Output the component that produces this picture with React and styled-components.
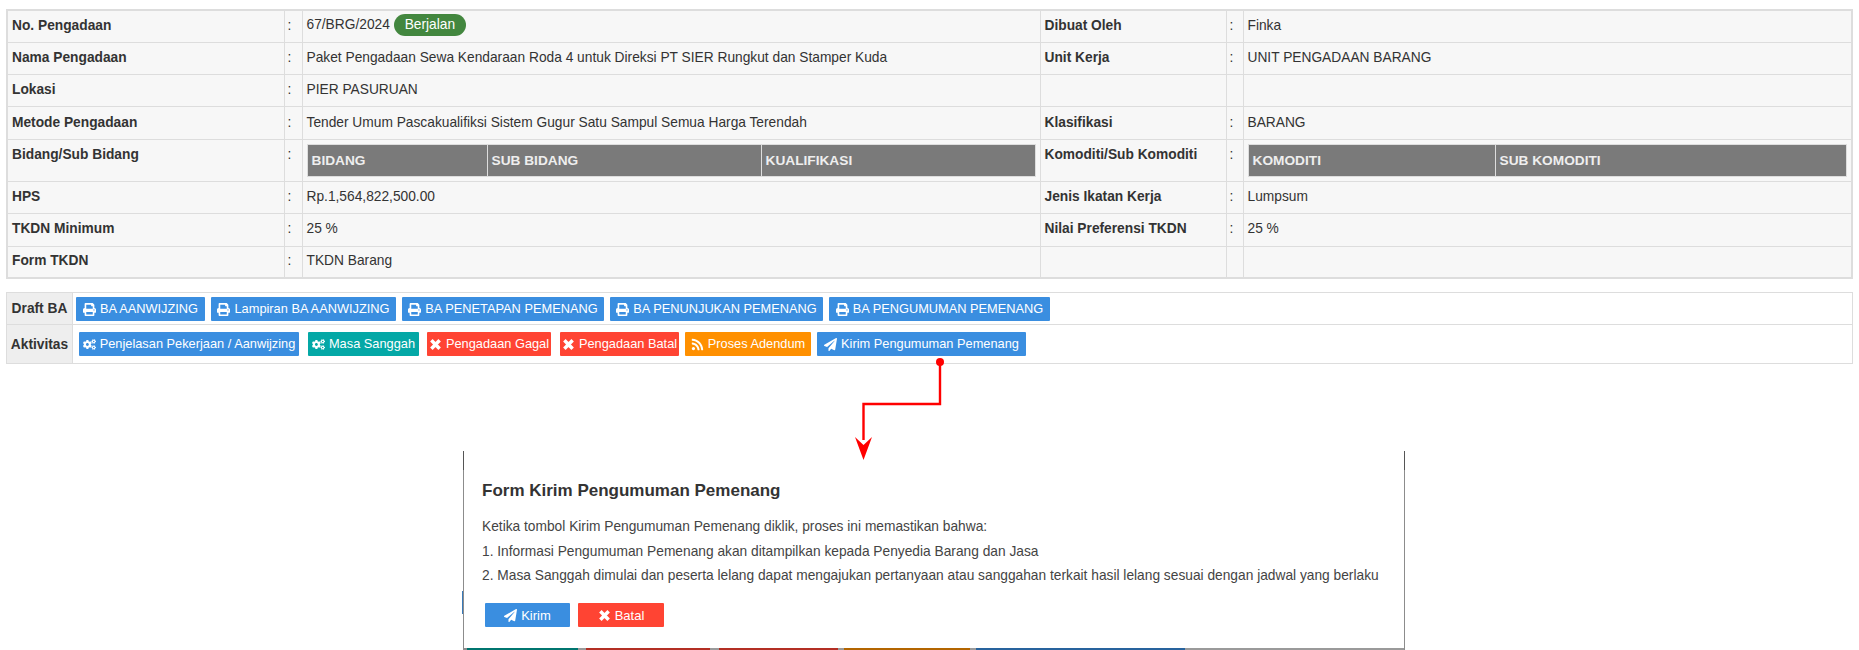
import React from "react";
import styled, { createGlobalStyle } from "styled-components";
import { FaPrint, FaCogs, FaRss, FaPaperPlane } from "react-icons/fa";

const TimesIcon = () => (
  <XSvg viewBox="0 0 11 11">
    <path d="M2 2L9 9M9 2L2 9" fill="none" stroke="currentColor" strokeWidth="3" />
  </XSvg>
);

const draftButtons = [
  { label: "BA AANWIJZING", width: 129 },
  { label: "Lampiran BA AANWIJZING", width: 185 },
  { label: "BA PENETAPAN PEMENANG", width: 202 },
  { label: "BA PENUNJUKAN PEMENANG", width: 213 },
  { label: "BA PENGUMUMAN PEMENANG", width: 221 },
];

const activityButtons = [
  { label: "Penjelasan Pekerjaan / Aanwijzing", width: 220, color: "#3a8ee0", Icon: FaCogs, gap: 0 },
  { label: "Masa Sanggah", width: 111, color: "#04a8a6", Icon: FaCogs, gap: 9 },
  { label: "Pengadaan Gagal", width: 124, color: "#ff4433", Icon: TimesIcon, gap: 8 },
  { label: "Pengadaan Batal", width: 119, color: "#ff4433", Icon: TimesIcon, gap: 9 },
  { label: "Proses Adendum", width: 126, color: "#ff9000", Icon: FaRss, gap: 6 },
  { label: "Kirim Pengumuman Pemenang", width: 209, color: "#3a8ee0", Icon: FaPaperPlane, gap: 6 },
];

const strips = [
  { width: 3, color: "#8c8c8c" },
  { width: 111, color: "#00756f" },
  { width: 8, color: "#9a9a9a" },
  { width: 124, color: "#b32f24" },
  { width: 9, color: "#9a9a9a" },
  { width: 119, color: "#b32f24" },
  { width: 6, color: "#9a9a9a" },
  { width: 126, color: "#b36500" },
  { width: 6, color: "#9a9a9a" },
  { width: 209, color: "#28639d" },
  { width: 219, color: "#9a9a9a" },
];

const App = () => {
  return (
    <Page>
      <GlobalStyle />
      <InfoTable>
        <colgroup>
          <Col $width={277} />
          <Col $width={18} />
          <Col $width={738} />
          <Col $width={186} />
          <Col $width={17} />
          <Col />
        </colgroup>
        <tbody>
          <Row label="No. Pengadaan" label2="Dibuat Oleh" value2="Finka">
            67/BRG/2024 <Badge>Berjalan</Badge>
          </Row>
          <Row label="Nama Pengadaan" label2="Unit Kerja" value2="UNIT PENGADAAN BARANG">
            Paket Pengadaan Sewa Kendaraan Roda 4 untuk Direksi PT SIER Rungkut dan Stamper Kuda
          </Row>
          <Row label="Lokasi">PIER PASURUAN</Row>
          <Row label="Metode Pengadaan" label2="Klasifikasi" value2="BARANG">
            Tender Umum Pascakualifiksi Sistem Gugur Satu Sampul Semua Harga Terendah
          </Row>
          <tr>
            <LabelCell $top>Bidang/Sub Bidang</LabelCell>
            <ColonCell $top>:</ColonCell>
            <ValueCell $nested>
              <HeadTable>
                <thead>
                  <tr>
                    <HeadCell $width={180}>BIDANG</HeadCell>
                    <HeadCell $width={274}>SUB BIDANG</HeadCell>
                    <HeadCell>KUALIFIKASI</HeadCell>
                  </tr>
                </thead>
              </HeadTable>
            </ValueCell>
            <LabelCell $top>Komoditi/Sub Komoditi</LabelCell>
            <ColonCell $top>:</ColonCell>
            <ValueCell $nested>
              <HeadTable>
                <thead>
                  <tr>
                    <HeadCell $width={247}>KOMODITI</HeadCell>
                    <HeadCell>SUB KOMODITI</HeadCell>
                  </tr>
                </thead>
              </HeadTable>
            </ValueCell>
          </tr>
          <Row label="HPS" label2="Jenis Ikatan Kerja" value2="Lumpsum">
            Rp.1,564,822,500.00
          </Row>
          <Row label="TKDN Minimum" label2="Nilai Preferensi TKDN" value2="25 %">
            25 %
          </Row>
          <Row label="Form TKDN">TKDN Barang</Row>
        </tbody>
      </InfoTable>

      <ActionTable>
        <tbody>
          <tr>
            <ActionLabel $height={31}>Draft BA</ActionLabel>
            <ActionCell $left={3} $top={4} $bottom={3}>
              {draftButtons.map((b, i) => (
                <ActionButton key={b.label} $width={b.width} $gap={i ? 6 : 0} $color="#3a8ee0">
                  <FaPrint />
                  <span>{b.label}</span>
                </ActionButton>
              ))}
            </ActionCell>
          </tr>
          <tr>
            <ActionLabel $height={38}>Aktivitas</ActionLabel>
            <ActionCell $left={6} $top={7} $bottom={6}>
              {activityButtons.map((b) => (
                <ActionButton key={b.label} $width={b.width} $gap={b.gap} $color={b.color}>
                  <b.Icon />
                  <span>{b.label}</span>
                </ActionButton>
              ))}
            </ActionCell>
          </tr>
        </tbody>
      </ActionTable>

      <Connector width="90" height="104" viewBox="0 0 90 104">
        <circle cx="85" cy="4" r="4" fill="#f00" />
        <path d="M85 4V46H8.5V82" fill="none" stroke="#f00" strokeWidth="2.4" />
        <path d="M0 79L8.5 87L17 79L8.5 102Z" fill="#f00" />
      </Connector>

      <Modal>
        <LeftStub />
        <ModalTitle>Form Kirim Pengumuman Pemenang</ModalTitle>
        <ModalText>Ketika tombol Kirim Pengumuman Pemenang diklik, proses ini memastikan bahwa:</ModalText>
        <ModalText>1. Informasi Pengumuman Pemenang akan ditampilkan kepada Penyedia Barang dan Jasa</ModalText>
        <ModalText>
          2. Masa Sanggah dimulai dan peserta lelang dapat mengajukan pertanyaan atau sanggahan terkait hasil lelang
          sesuai dengan jadwal yang berlaku
        </ModalText>
        <ModalActions>
          <ModalButton $color="#3a8ee0" $width={85}>
            <FaPaperPlane />
            <span>Kirim</span>
          </ModalButton>
          <ModalButton $color="#ff4433" $width={86}>
            <TimesIcon />
            <span>Batal</span>
          </ModalButton>
        </ModalActions>
        <BottomEdge>
          {strips.map((s, i) => (
            <EdgeStrip key={i} $width={s.width} $color={s.color} />
          ))}
        </BottomEdge>
      </Modal>
    </Page>
  );
};

const Row = ({ label, label2, value2, children }) => (
  <tr>
    <LabelCell>{label}</LabelCell>
    <ColonCell>:</ColonCell>
    <ValueCell>{children}</ValueCell>
    <LabelCell>{label2}</LabelCell>
    <ColonCell>{label2 ? ":" : ""}</ColonCell>
    <ValueCell>{value2}</ValueCell>
  </tr>
);

export default App;

const GlobalStyle = createGlobalStyle`
  html, body {
    margin: 0;
    height: 650px;
    overflow: hidden;
    background: #fff;
  }
  body {
    font-family: "Liberation Sans", Arial, sans-serif;
    font-size: 13.75px;
    color: #333;
  }
`;

const Page = styled.div`
  position: relative;
  width: 1859px;
  height: 650px;
  padding: 9px 6px 0;
  box-sizing: border-box;
  overflow: hidden;
`;

const XSvg = styled.svg`
  width: 10px;
  height: 10px;
  flex: none;
`;

const InfoTable = styled.table`
  width: 1847px;
  table-layout: fixed;
  border-collapse: collapse;
  background: #f7f7f7;
  border: 2px solid #ddd;
  & tr {
    height: 32.3px;
  }
  & td {
    border: 1px solid #ddd;
  }
`;

const Col = styled.col`
  width: ${(p) => (p.$width ? `${p.$width}px` : "auto")};
`;

const LabelCell = styled.td`
  padding: ${(p) => (p.$top ? "7px 4px 0" : "0 4px 2px")};
  vertical-align: ${(p) => (p.$top ? "top" : "middle")};
  font-weight: bold;
  box-sizing: border-box;
`;

const ColonCell = styled.td`
  padding: ${(p) => (p.$top ? "7px 0 0 3px" : "0 0 2px 3px")};
  vertical-align: ${(p) => (p.$top ? "top" : "middle")};
  box-sizing: border-box;
`;

const ValueCell = styled.td`
  padding: ${(p) => (p.$nested ? "4px" : "0 4px 2px")};
  box-sizing: border-box;
`;

const Badge = styled.span`
  display: inline-block;
  height: 22px;
  line-height: 22px;
  padding: 0 11px;
  margin-left: 0;
  border-radius: 11px;
  background: #43873f;
  color: #fff;
  vertical-align: middle;
`;

const HeadTable = styled.table`
  width: 100%;
  table-layout: fixed;
  border-collapse: collapse;
  border: 1px solid #ddd;
`;

const HeadCell = styled.th`
  width: ${(p) => (p.$width ? `${p.$width}px` : "auto")};
  height: 31px;
  padding: 0 4px;
  box-sizing: border-box;
  background: #7a7a7a;
  border-right: 1px solid #ddd;
  color: #eee;
  font-size: 13.7px;
  text-align: left;
  &:last-child {
    border-right: 0;
  }
`;

const ActionTable = styled.table`
  width: 1847px;
  margin-top: 13px;
  table-layout: fixed;
  border-collapse: collapse;
  border: 1px solid #ddd;
  & tr + tr td {
    border-top: 1px solid #ddd;
  }
`;

const ActionLabel = styled.td`
  width: 65px;
  height: ${(p) => p.$height}px;
  padding: 0;
  background: #eee;
  border-right: 1px solid #ddd;
  font-weight: bold;
  text-align: center;
`;

const ActionCell = styled.td`
  padding: ${(p) => `${p.$top}px 0 ${p.$bottom}px ${p.$left}px`};
  line-height: 0;
  vertical-align: top;
`;

const ActionButton = styled.button`
  display: inline-flex;
  align-items: center;
  justify-content: center;
  gap: 4px;
  width: ${(p) => p.$width}px;
  height: 24px;
  margin: 0 0 0 ${(p) => p.$gap}px;
  padding: 0;
  border: 0;
  border-radius: 1px;
  background: ${(p) => p.$color};
  color: #fff;
  font-family: inherit;
  font-size: 12.8px;
  line-height: 16px;
  vertical-align: top;
  white-space: nowrap;
  & svg {
    width: 13px;
    height: 13px;
    flex: none;
  }
`;

const Connector = styled.svg`
  position: absolute;
  left: 855px;
  top: 358px;
  z-index: 2;
`;

const Modal = styled.div`
  position: relative;
  width: 942px;
  height: 199px;
  margin: 87px 0 0 457px;
  padding: 30px 18px 0;
  box-sizing: border-box;
  background: #fff;
  border-left: 1px solid #8c8c8c;
  border-right: 1px solid #8c8c8c;
  &::before,
  &::after {
    content: "";
    position: absolute;
    top: 0;
    width: 1px;
    height: 19px;
    background: #555;
  }
  &::before {
    left: -1px;
  }
  &::after {
    right: -1px;
  }
`;

const LeftStub = styled.div`
  position: absolute;
  left: -2px;
  top: 140px;
  width: 1px;
  height: 23px;
  background: #3a7ab8;
`;

const ModalTitle = styled.h4`
  margin: 0 0 17px;
  font-size: 17px;
  font-weight: bold;
  line-height: 20px;
`;

const ModalText = styled.p`
  margin: 0 0 6.5px;
  font-size: 13.75px;
  line-height: 18px;
  color: #444;
`;

const ModalActions = styled.div`
  display: flex;
  gap: 8px;
  margin: 18px 0 0 3px;
`;

const ModalButton = styled.button`
  display: inline-flex;
  align-items: center;
  justify-content: center;
  gap: 4px;
  width: ${(p) => p.$width}px;
  height: 24px;
  padding: 0;
  border: 0;
  border-radius: 1px;
  background: ${(p) => p.$color};
  color: #fff;
  font-family: inherit;
  font-size: 13px;
  & svg {
    width: 13px;
    height: 13px;
  }
`;

const BottomEdge = styled.div`
  position: absolute;
  left: 0;
  right: 0;
  bottom: 0;
  display: flex;
  height: 2px;
`;

const EdgeStrip = styled.div`
  width: ${(p) => p.$width}px;
  background: ${(p) => p.$color};
`;
